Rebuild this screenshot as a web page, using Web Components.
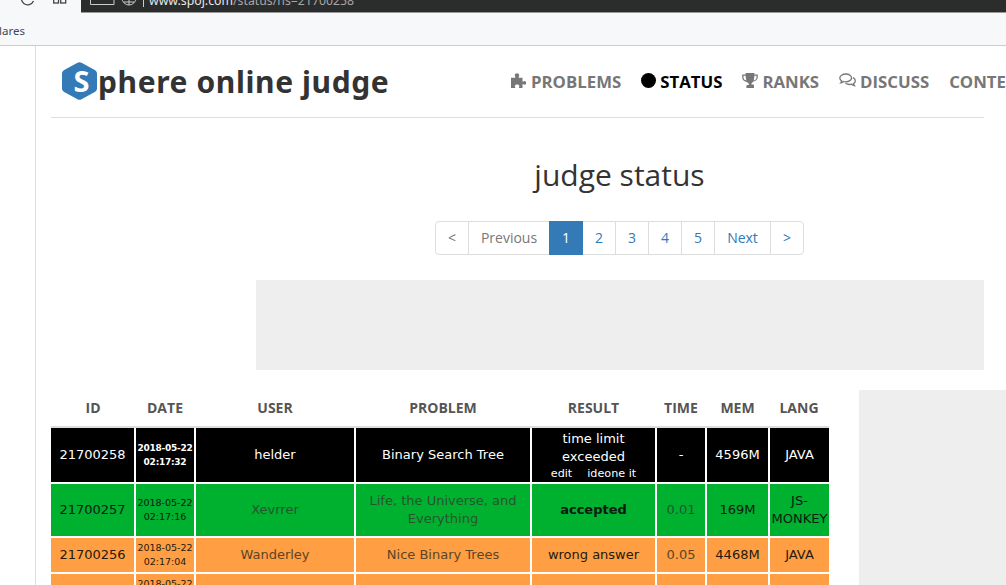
<!DOCTYPE html>
<html><head><meta charset="utf-8"><style>
html,body{margin:0;padding:0;background:#fff;overflow:hidden;height:585px;width:1006px}
body{font-family:"Open Sans",sans-serif;color:#333}
</style></head><body>
<browser-chrome></browser-chrome>
<spoj-page>
  <spoj-header></spoj-header>
  <spoj-content></spoj-content>
</spoj-page>
<script>
function def(name,html,init){
  customElements.define(name,class extends HTMLElement{
    constructor(){super();this.attachShadow({mode:'open'}).innerHTML=html;if(init)init(this.shadowRoot);}
  });
}
def('browser-chrome',`<style>
:host{display:block;height:45px;background:#f7f8fa;border-bottom:1px solid #ccc;overflow:hidden;font-family:"Noto Sans","Open Sans",sans-serif}
.top{display:flex;height:12px;position:relative}
.tools{width:81px;flex:none;position:relative;overflow:hidden}
.tools svg{position:absolute;top:-12px}
.url{flex:1;background:#2b2c2c;color:#a8a8a8;display:flex;overflow:hidden;height:12px;border-bottom:1px solid #999;position:relative}
.url svg{flex:none;position:absolute;left:0;top:0}
.addr{position:absolute;left:68px;top:-7px;font:12.300px/16px "Noto Sans",sans-serif;white-space:nowrap}
.host{color:#e8e8e8}
.bm{font:11.500px/16px "Noto Sans",sans-serif;color:#3c4858;padding:11px 0 0 0;margin-left:-1px}
</style>
<div class="top"><div class="tools">
<svg style="left:20px" width="16" height="20" viewBox="0 0 16 20" fill="none" stroke="#444" stroke-width="1.300"><path d="M13.500 13a6.300 6.300 0 1 1 0-5"/></svg>
<svg style="left:53px;top:-11px" width="14" height="20" viewBox="0 0 14 20" fill="none" stroke="#444" stroke-width="1.300"><rect x=".7" y="3" width="4.800" height="11"/><rect x="7.700" y="3" width="5" height="11"/></svg>
</div><div class="url">
<svg width="70" height="12" viewBox="0 0 70 12" fill="none" stroke="#ccc" stroke-width="1"><path d="M9.500-1V4.500H33V-1"/><circle cx="48" cy="-2" r="7"/><path d="M41-2h14M48-9v14M43 2h10"/><path d="M62.500-2V7"/></svg>
<span class="addr"><span class="host">www.spoj.com</span>/status/ns=21700258</span>
</div></div>
<div class="bm">lares</div>`);

def('spoj-page',`<style>
:host{display:block;height:539px;margin-left:35px;border-left:1px solid #ddd;padding-left:15px;padding-right:22px;overflow:hidden}
</style><slot></slot>`);

const puzzle=`<svg width="17" height="15" viewBox="0 0 17 15" fill="#777"><path d="M1 4.800h3.900c.5 0 .6-.4.4-.8-.3-.5-.5-.9-.5-1.500C4.800 1.200 5.800.3 7 .3s2.200.9 2.200 2.200c0 .6-.2 1-.5 1.500-.2.400-.1.800.4.800h3.400v3.500c0 .5.400.6.800.3.400-.3.700-.5 1.200-.5 1 0 1.600.8 1.600 1.800s-.6 1.800-1.600 1.800c-.5 0-.8-.2-1.200-.5-.4-.3-.8-.2-.8.300V15H9.400c-.5 0-.6-.4-.4-.8.200-.4.400-.7.400-1.100 0-.9-1-1.500-2.300-1.500s-2.300.6-2.300 1.500c0 .4.200.7.400 1.100.2.400.1.800-.4.800H1z"/></svg>`;
const dot=`<svg width="15" height="15" viewBox="0 0 15 15" fill="#000"><circle cx="7.500" cy="7.500" r="7.500"/></svg>`;
const trophy=`<svg width="16" height="15" viewBox="0 0 16 15"><path fill="#777" d="M3.600 0h8.800v1.500h3.400v2.500c0 2.400-2 4.200-4.500 4.500-.5.800-1.100 1.300-1.800 1.700v1.300h1.300c.8 0 1.200.5 1.200 1.100V15H4.400v-1.900c0-.6.400-1.100 1.200-1.100h1.300v-1.300c-.7-.4-1.300-.9-1.800-1.700C2.200 8.700.2 6.900.2 4.500V1.500h3.400zM1.500 2.800v1.700c0 1.600 1 2.600 2.800 3-.3-1.200-.6-2.800-.7-4.700zM14.500 2.800h-2.100c-.1 1.900-.4 3.500-.7 4.700 1.800-.4 2.800-1.400 2.800-3z"/></svg>`;
const comments=`<svg width="17" height="15" viewBox="0 0 17 15" fill="none" stroke="#777" stroke-width="1.300"><path d="M6.800 1C3.500 1 .8 2.800.8 5c0 1.200.7 2.300 1.900 3-.2.700-.5 1.300-.9 1.800 1.100-.2 2-.7 2.700-1.300.7.200 1.400.3 2.200.3 3.300 0 5.900-1.800 5.900-3.800S10.100 1 6.800 1z"/><path d="M14 4.600c1.400.7 2.300 1.800 2.300 3.100 0 1.200-.7 2.300-1.900 3 .2.700.5 1.300.9 1.800-1.100-.2-2-.7-2.700-1.300-.7.200-1.300.3-2 .3-1.600 0-3.100-.5-4.100-1.300"/></svg>`;

def('nav-item',`<style>
:host{display:inline-flex;align-items:center;gap:4px;font:700 16.800px/22px "Open Sans",sans-serif;color:#777;white-space:nowrap}
:host([active]){color:#000}
svg{display:block}
</style><slot name="icon"></slot><slot></slot>`);

def('spoj-header',`<style>
:host{display:flex;height:71px;border-bottom:1px solid #ddd;align-items:center;white-space:nowrap}
.logo{display:flex;align-items:center;margin-left:11px;font:700 30px/36px "Noto Sans","Open Sans",sans-serif;color:#333;width:448px;flex:none}
.hex{position:relative;width:35px;height:38px;flex:none;display:block;margin-top:-2px;margin-right:1px}
.hex svg{display:block}
.hex span{position:absolute;left:2px;top:0;width:35px;text-align:center;color:#fff;font:700 29px/37px "Open Sans",sans-serif}
.name{margin-left:0;letter-spacing:.6px}
nav{display:flex;gap:20px;align-items:center}
</style>
<div class="logo"><span class="hex"><svg width="35" height="38" viewBox="0 0 35 38"><path fill="#337ab7" d="M15.500.8c1.200-.7 2.800-.7 4 0L32.800 8c1.300.7 2.200 2 2.200 3.500v15c0 1.500-.9 2.800-2.200 3.500l-13.300 7.200c-1.200.7-2.800.7-4 0L2.200 30C.9 29.300 0 28 0 26.500v-15C0 10 .9 8.700 2.200 8z"/></svg><span>S</span></span><span class="name">phere online judge</span></div>
<nav>
<nav-item><span slot="icon">${puzzle}</span>PROBLEMS</nav-item>
<nav-item active><span slot="icon">${dot}</span>STATUS</nav-item>
<nav-item><span slot="icon">${trophy}</span>RANKS</nav-item>
<nav-item><span slot="icon">${comments}</span>DISCUSS</nav-item>
<nav-item>CONTESTS</nav-item>
</nav>`);

def('page-link',`<style>
:host{display:block;box-sizing:border-box;height:34px;width:var(--w,34px);border:1px solid #ddd;margin-left:-1px;text-align:center;font:14px/32px "Open Sans",sans-serif;color:#337ab7;background:#fff}
:host([muted]){color:#777}
:host([current]){background:#337ab7;border-color:#337ab7;color:#fff;position:relative}
:host(:first-child){border-radius:4px 0 0 4px;margin-left:0}
:host(:last-child){border-radius:0 4px 4px 0}
</style><slot></slot>`);

def('page-nav',`<style>:host{display:flex;justify-content:center;margin-top:26px;padding-right:1px}</style><slot></slot>`);

const rows=[
 {c:'tle',id:'21700258',d:['2018-05-22','02:17:32'],u:'helder',p:'Binary Search Tree',r:'<div>time limit<br>exceeded</div><div class="links"><span>edit</span><span>ideone it</span></div>',t:'-',m:'4596M',l:'JAVA',h:54},
 {c:'ac',id:'21700257',d:['2018-05-22','02:17:16'],u:'Xevrrer',p:'Life, the Universe, and Everything',r:'<b>accepted</b>',t:'0.01',m:'169M',l:'JS-MONKEY',h:52},
 {c:'wa',id:'21700256',d:['2018-05-22','02:17:04'],u:'Wanderley',p:'Nice Binary Trees',r:'wrong answer',t:'0.05',m:'4468M',l:'JAVA',h:34},
 {c:'wa',id:'21700255',d:['2018-05-22','02:16:58'],u:'',p:'',r:'',t:'',m:'',l:'',h:34}
];
def('status-table',`<style>
:host{display:block;width:779px;flex:none}
table{border-collapse:collapse;table-layout:fixed;width:778px;font:13px/18px "DejaVu Sans",sans-serif}
th{font:700 14px/20px "Open Sans",sans-serif;color:#555;text-align:center;padding:0 0 8px;height:37px;box-sizing:border-box;vertical-align:bottom;border-bottom:2px solid #ddd}
td{border:2px solid #fff;padding:0 1px;text-align:center;vertical-align:middle;box-sizing:border-box;overflow:hidden}
tr td:first-child{border-left:0}
tr td:last-child{border-right:0}
tr:first-child td{border-top:0}
.date{font-size:9.500px;line-height:14px;padding:0;white-space:nowrap}
.tle td{background:#000;color:#fff}
.tle .date{font-size:9px;font-weight:700;letter-spacing:-.25px}
.ac td{background:#00b02f;color:#26562f}
.wa td{background:#ff9e42;color:#5a4528}
.ac .dk{color:#0a1a10}
.wa .dk{color:#241a10}
.tle .dk{color:#fff}
.links{font-size:11.200px;line-height:14px;display:flex;justify-content:center;gap:15px;padding-top:1px}
</style>
<table><colgroup><col style="width:84px"><col style="width:60px"><col style="width:160px"><col style="width:176px"><col style="width:125px"><col style="width:50px"><col style="width:63px"><col style="width:60px"></colgroup>
<thead><tr><th>ID</th><th>DATE</th><th>USER</th><th>PROBLEM</th><th>RESULT</th><th>TIME</th><th>MEM</th><th>LANG</th></tr></thead>
<tbody>${rows.map(r=>`<tr class="${r.c}" style="height:${r.h+2}px"><td class="id dk">${r.id}</td><td class="date dk">${r.d.join('<br>')}</td><td>${r.u}</td><td>${r.p}</td><td class="dk">${r.r}</td><td>${r.t}</td><td class="dk">${r.m}</td><td class="dk">${r.l}</td></tr>`).join('')}</tbody></table>`);

def('spoj-content',`<style>
:host{display:block}
.main{margin-left:205px}
h1{font:400 30px/40px "Open Sans",sans-serif;color:#333;text-align:center;margin:37px 0 0;padding-right:1px}
.ad{height:90px;background:#eee;margin-top:25px}
.low{display:flex;margin-top:20px;gap:29px;align-items:flex-start}
.side{flex:1;background:#eee;height:300px;margin-right:-22px}
</style>
<div class="main"><h1>judge status</h1>
<page-nav><page-link muted>&lt;</page-link><page-link muted style="--w:82px">Previous</page-link><page-link current>1</page-link><page-link>2</page-link><page-link>3</page-link><page-link>4</page-link><page-link>5</page-link><page-link style="--w:57px">Next</page-link><page-link>&gt;</page-link></page-nav>
<div class="ad"></div></div>
<div class="low"><status-table></status-table><div class="side"></div></div>`);
</script>
</body></html>
